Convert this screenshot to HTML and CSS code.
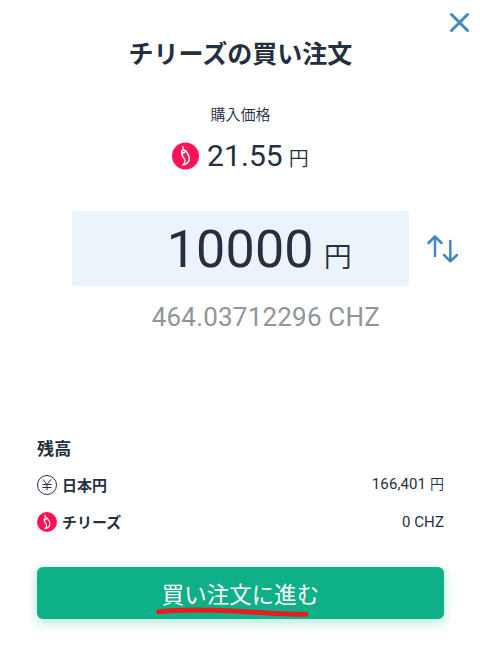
FILE: index.html
```
<!DOCTYPE html>
<html lang="ja">

<head>
    <meta charset="UTF-8">
    <meta name="viewport" content="width=device-width, initial-scale=1.0">
    <title>チリーズの買い注文</title>
    <link rel="stylesheet" href="styles.css">
</head>

<body>
    <svg class="defs" width="0" height="0">
        <symbol id="chz" viewBox="0 0 28 28">
            <circle cx="14" cy="14" r="14" fill="#ff1256"/>
            <path d="M11.2 4.500C11 6 11.800 6.800 12.800 8M9.800 9.800C10 8.500 11.200 7.900 12.800 8C14.500 8.100 15.200 9 15.400 10L13.300 9.500L12 11.200L9.800 9.800ZM10.200 11C9 14.200 13.500 15.500 13.500 18.800C13.500 20.900 12.500 22.200 11.200 23.400C15.800 22.600 18.200 19.300 17.900 15.800C17.700 13.500 16.500 12.200 15.400 10" fill="none" stroke="#fff" stroke-width="1.500" stroke-linecap="round" stroke-linejoin="round"/>
        </symbol>
    </svg>
    <div class="modal">
        <div class="modal-head">
            <button class="close" type="button" aria-label="閉じる">
                <svg width="20" height="20" viewBox="0 0 20 20">
                    <path d="M2.500 2.500l16 16M18.500 2.500L2.500 18.500"/>
                </svg>
            </button>
        </div>
        <h1 class="title">チリーズの買い注文</h1>
        <div class="price-label">購入価格</div>
        <div class="price">
            <svg class="price-icon"><use href="#chz"/></svg>
            <span class="price-num">21.55</span>
            <span class="price-unit">円</span>
        </div>
        <div class="order">
            <div class="amount">
                <span class="amount-num">10000</span>
                <span class="amount-unit">円</span>
            </div>
            <button class="swap" type="button" aria-label="切り替え">
                <svg width="32" height="28" viewBox="0 0 32 28">
                    <path d="M8 21V2M1.500 8L8 1.500L14.500 8M23.300 6V26M17 20L23.300 26.300L30 20"/>
                </svg>
            </button>
        </div>
        <div class="converted">464.03712296 CHZ</div>
        <div class="balance">
            <h2 class="balance-title">残高</h2>
            <div class="row">
                <svg class="row-icon" viewBox="0 0 20 20">
                    <circle class="yen" cx="10" cy="10" r="9.500"/>
                    <path class="yen" d="M6 4.500L10 9.500L14 4.500M10 9.500V15.500M5.500 9.500H14.500M5.500 12.500H14.500"/>
                </svg>
                <span class="row-name">日本円</span>
                <span class="row-value row-value-jpy">166,401 <span class="row-unit">円</span></span>
            </div>
            <div class="row">
                <svg class="row-icon"><use href="#chz"/></svg>
                <span class="row-name">チリーズ</span>
                <span class="row-value">0 CHZ</span>
            </div>
        </div>
        <button class="submit" type="button">
            買い注文に進む
            <svg class="marker" width="156" height="12" viewBox="0 0 156 12">
                <path d="M3.500 4.700C22 2.500 48 2.700 78 3.900C106 5.400 126 7.300 151 7.300"/>
            </svg>
        </button>
    </div>
</body>

</html>
```
FILE: styles.css
```
* {
    box-sizing: border-box;
}
body {
    margin: 0;
    background: #fff;
    color: #252f3f;
    font-family: Roboto, "Noto Sans CJK JP", sans-serif;
    letter-spacing: 0.2px;
}
button {
    padding: 0;
    border: 0;
    background: none;
    font: inherit;
    letter-spacing: inherit;
    cursor: pointer;
}
.defs {
    display: block;
}
.modal {
    width: 480px;
    height: 645px;
    padding: 12px 36px 0 37px;
}
.modal-head {
    display: flex;
    justify-content: flex-end;
    height: 20px;
    margin-right: -25px;
}
.close, .swap {
    display: flex;
    flex-shrink: 0;
}
.close path, .swap path {
    fill: none;
    stroke: #4288c5;
    stroke-width: 2.500;
    stroke-linecap: round;
    stroke-linejoin: round;
}
.close path {
    stroke-width: 3;
}
.title {
    margin: 5px 0 0;
    font-size: 25px;
    font-weight: 700;
    line-height: 36px;
    letter-spacing: 0;
    text-align: center;
}
.price-label {
    margin-top: 31px;
    font-size: 15px;
    font-weight: 350;
    line-height: 22px;
    letter-spacing: 0;
    text-align: center;
}
.price {
    display: flex;
    justify-content: center;
    align-items: center;
    height: 40px;
    margin-top: 10px;
}
.price-icon {
    width: 27px;
    height: 28px;
    margin-right: 8px;
}
.price-num {
    font-size: 30px;
    letter-spacing: 0.1px;
    line-height: 40px;
}
.price-unit {
    margin: 5px 0 0 6px;
    font-size: 20px;
    font-weight: 350;
    line-height: 30px;
}
.order {
    display: flex;
    align-items: center;
    margin: 35px -15px 0 35px;
}
.amount {
    display: flex;
    flex-shrink: 0;
    justify-content: flex-end;
    align-items: baseline;
    width: 337px;
    height: 75px;
    padding-right: 57px;
    border-radius: 3px;
    background: #ebf3fb;
    line-height: 77px;
}
.amount-num {
    font-size: 52px;
}
.amount-unit {
    margin-left: 10px;
    font-size: 28px;
    font-weight: 350;
}
.swap {
    margin-left: 18px;
}
.converted {
    margin: 13px 64px 0 0;
    color: #90959c;
    font-size: 26px;
    line-height: 36px;
    text-align: right;
}
.balance {
    margin-top: 101px;
}
.balance-title {
    margin: 0 0 11px;
    font-size: 17px;
    font-weight: 700;
    line-height: 26px;
}
.row {
    display: flex;
    align-items: center;
    height: 24px;
    margin-bottom: 13px;
    font-size: 15px;
    letter-spacing: 0.1px;
    line-height: 22px;
}
.row-icon {
    width: 20px;
    height: 20px;
    margin-right: 5px;
}
.row-name {
    padding-top: 2px;
    font-weight: 700;
    letter-spacing: 0;
}
.row-value {
    margin-left: auto;
}
.row-value-jpy {
    margin-bottom: 2px;
}
.row-unit {
    font-size: 14px;
    font-weight: 350;
}
.yen {
    fill: none;
    stroke: #252f3f;
    stroke-width: 1;
}
.submit {
    position: relative;
    display: block;
    width: 407px;
    height: 52px;
    margin-top: 33px;
    padding-top: 4px;
    border-radius: 6px;
    background: #0eb187;
    box-shadow: 0 3px 12px rgba(14, 177, 135, 0.35);
    color: #fff;
    font-size: 22.4px;
    letter-spacing: 0.1px;
    line-height: 49px;
}
/* hand-drawn underline over the label */
.marker {
    position: absolute;
    left: 118px;
    top: 40px;
}
.marker path {
    fill: none;
    stroke: #e51f1f;
    stroke-width: 5;
    stroke-linecap: round;
}
```
